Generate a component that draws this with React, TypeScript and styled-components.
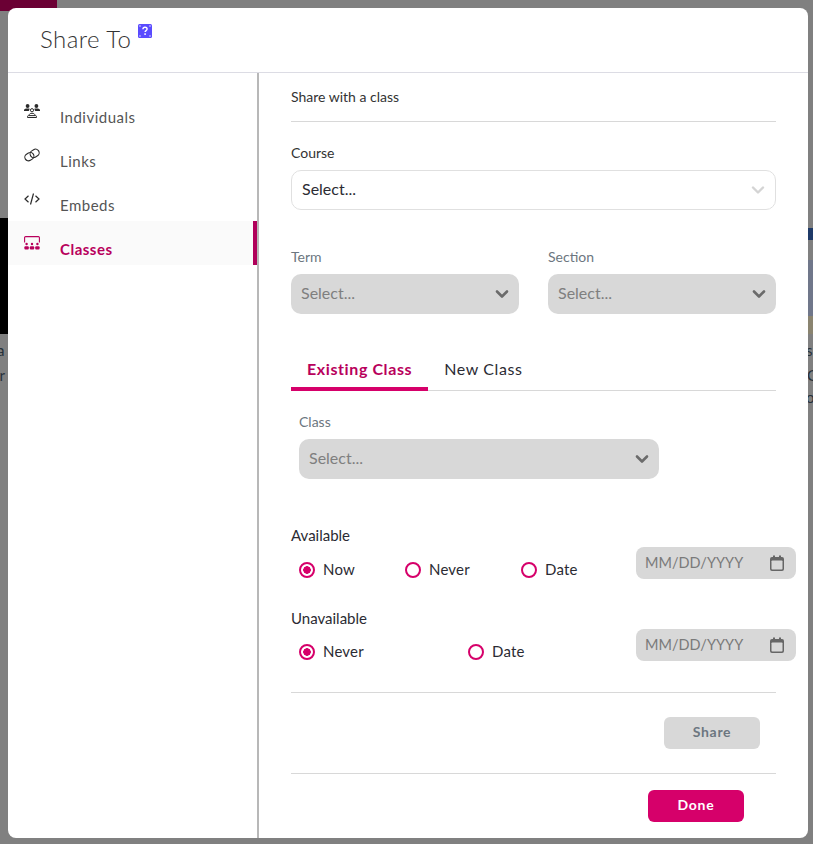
import React from 'react';
import styled, { createGlobalStyle } from 'styled-components';

const pink = '#d6006a';
const font = `Lato, "Open Sans", sans-serif`;

const GlobalStyle = createGlobalStyle`
  html, body {
    margin: 0;
    padding: 0;
    background: #808080;
    font-family: ${font};
    color: #2b2b33;
  }
`;

const App = () => {
  return (
    <Page>
      <GlobalStyle />
      <Backdrop />
      <BackdropText $left={-3} $top={341}>a</BackdropText>
      <BackdropText $left={-4} $top={366}>ir</BackdropText>
      <BackdropText $left={806} $top={341}>s</BackdropText>
      <BackdropText $left={807} $top={366}>C</BackdropText>
      <BackdropText $left={806} $top={388}>o</BackdropText>
      <Modal>
        <Header>
          <Title>Share To</Title>
          <HelpIcon />
        </Header>
        <Body>
          <Sidebar>
            <NavItem>
              <NavIcon><UsersIcon /></NavIcon>
              <NavText>Individuals</NavText>
            </NavItem>
            <NavItem>
              <NavIcon><LinkIcon /></NavIcon>
              <NavText>Links</NavText>
            </NavItem>
            <NavItem>
              <NavIcon><CodeIcon /></NavIcon>
              <NavText>Embeds</NavText>
            </NavItem>
            <NavItem $active>
              <NavIcon><ClassIcon /></NavIcon>
              <NavText>Classes</NavText>
            </NavItem>
          </Sidebar>
          <Main>
            <SectionTitle>Share with a class</SectionTitle>
            <Divider />
            <CourseField>
              <FieldLabel>Course</FieldLabel>
              <Select>
                <SelectValue>Select...</SelectValue>
                <Chevron color="#d4d4d4" weight={2.4} />
              </Select>
            </CourseField>
            <TwoCols>
              <div>
                <FieldLabel $muted>Term</FieldLabel>
                <Select $disabled>
                  <SelectValue>Select...</SelectValue>
                  <Chevron color="#6b6b6b" weight={2.6} />
                </Select>
              </div>
              <div>
                <FieldLabel $muted>Section</FieldLabel>
                <Select $disabled>
                  <SelectValue>Select...</SelectValue>
                  <Chevron color="#6b6b6b" weight={2.6} />
                </Select>
              </div>
            </TwoCols>
            <Tabs>
              <Tab $active>Existing Class</Tab>
              <Tab>New Class</Tab>
            </Tabs>
            <ClassField>
              <FieldLabel $muted>Class</FieldLabel>
              <Select $disabled>
                <SelectValue>Select...</SelectValue>
                <Chevron color="#6b6b6b" weight={2.6} />
              </Select>
            </ClassField>
            <AvailableHeading>Available</AvailableHeading>
            <RadioRow>
              <RadioGroup $columns="106px 116px 115px">
                <Radio checked label="Now" />
                <Radio label="Never" />
                <Radio label="Date" />
              </RadioGroup>
              <DateInput />
            </RadioRow>
            <UnavailableHeading>Unavailable</UnavailableHeading>
            <RadioRow>
              <RadioGroup $columns="169px 168px">
                <Radio checked label="Never" />
                <Radio label="Date" />
              </RadioGroup>
              <DateInput />
            </RadioRow>
            <ShareDivider />
            <ShareRow>
              <ShareButton>Share</ShareButton>
            </ShareRow>
            <Divider />
            <DoneRow>
              <DoneButton>Done</DoneButton>
            </DoneRow>
          </Main>
        </Body>
      </Modal>
    </Page>
  );
};

const Radio = ({ checked, label }: { checked?: boolean; label: string }) => (
  <RadioItem>
    <RadioCircle $checked={checked} />
    <RadioLabel>{label}</RadioLabel>
  </RadioItem>
);

const DateInput = () => (
  <DateBox>
    <DateText>MM/DD/YYYY</DateText>
    <svg width="14" height="16" viewBox="0 0 14 16">
      <path
        d="M3 0.5h2v1.5h4V0.5h2V2h1a2 2 0 0 1 2 2v10a2 2 0 0 1-2 2H2a2 2 0 0 1-2-2V4a2 2 0 0 1 2-2h1z"
        fill="#666"
      />
      <rect x="1.5" y="5.5" width="11" height="9" rx="0.8" fill="#d8d8d8" />
    </svg>
  </DateBox>
);

const Chevron = ({ color, weight }: { color: string; weight: number }) => (
  <svg width="14" height="10" viewBox="0 0 14 10" fill="none">
    <path
      d="M2 2.5 7 7.5 12 2.5"
      stroke={color}
      strokeWidth={weight}
      strokeLinecap="round"
      strokeLinejoin="round"
    />
  </svg>
);

const HelpIcon = () => (
  <HelpSvg width="14" height="14" viewBox="0 0 14 14">
    <rect width="14" height="14" rx="1.5" fill="#5a4bff" />
    <circle cx="2" cy="2" r="0.7" fill="#fff" />
    <circle cx="12" cy="2" r="0.7" fill="#fff" />
    <circle cx="2" cy="12" r="0.7" fill="#fff" />
    <circle cx="12" cy="12" r="0.7" fill="#fff" />
    <path
      d="M4.9 5.2C5 3.9 5.9 3.3 7 3.3c1.2 0 2.1.7 2.1 1.8 0 1.6-2 1.5-2 3"
      fill="none"
      stroke="#fff"
      strokeWidth="1.4"
    />
    <rect x="6.3" y="9.3" width="1.6" height="1.6" fill="#fff" />
  </HelpSvg>
);

const UsersIcon = () => (
  <svg width="16" height="14" viewBox="0 0 16 14">
    <circle cx="3.6" cy="2" r="1.9" fill="#2b2b2b" />
    <circle cx="12.4" cy="2" r="1.9" fill="#2b2b2b" />
    <path d="M0 7V6.2C0 5 1.2 4.4 3.6 4.4c.9 0 1.6.1 2.1.3L4.8 7z" fill="#2b2b2b" />
    <path d="M16 7V6.2c0-1.2-1.2-1.8-3.6-1.8-.9 0-1.6.1-2.1.3l.9 2.3z" fill="#2b2b2b" />
    <circle cx="8" cy="6.2" r="1.6" fill="none" stroke="#2b2b2b" />
    <path d="M5 11.6c0-1.6 1.2-2.3 3-2.3s3 .7 3 2.3" fill="none" stroke="#2b2b2b" />
    <path d="M3.5 12.6c0-.6.4-1 1-1h7c.6 0 1 .4 1 1v.9h-9z" fill="none" stroke="#2b2b2b" />
  </svg>
);

const LinkIcon = () => (
  <svg width="16" height="14" viewBox="0 0 16 14" fill="none" stroke="#2b2b2b" strokeWidth="1.1">
    <g transform="rotate(-32 8 7)">
      <rect x="0.2" y="3.4" width="9.4" height="7.2" rx="3.6" />
      <rect x="6.4" y="3.4" width="9.4" height="7.2" rx="3.6" />
    </g>
  </svg>
);

const CodeIcon = () => (
  <svg width="16" height="12" viewBox="0 0 16 12" fill="none" stroke="#2b2b2b" strokeWidth="1.2">
    <path d="M4.5 2.8 1 6l3.5 3.2" />
    <path d="M11.5 2.8 15 6l-3.5 3.2" />
    <path d="M9.5 0.5 6.5 11.5" />
  </svg>
);

const ClassIcon = () => (
  <svg width="16" height="14" viewBox="0 0 16 14" fill="#b8005c">
    <path d="M0.6 6.5V1.6a1 1 0 0 1 1-1h12.8a1 1 0 0 1 1 1v4.9" fill="none" stroke="#b8005c" strokeWidth="1.1" />
    <circle cx="2.6" cy="8" r="1.2" />
    <circle cx="8" cy="8" r="1.2" />
    <circle cx="13.4" cy="8" r="1.2" />
    <rect x="0.4" y="10.2" width="4.4" height="3.2" rx="1" />
    <rect x="5.8" y="10.2" width="4.4" height="3.2" rx="1" />
    <rect x="11.2" y="10.2" width="4.4" height="3.2" rx="1" />
  </svg>
);

/* dimmed page that shows round the modal */
const Page = styled.div`
  position: relative;
  width: 813px;
  height: 844px;
  padding: 8px 5px 6px 8px;
  box-sizing: border-box;
  overflow: hidden;
`;

const Backdrop = styled.div`
  position: absolute;
  inset: 0;
  background:
    linear-gradient(#000, #000) 0 218px / 8px 116px no-repeat,
    linear-gradient(#6b0034, #6b0034) 0 0 / 57px 11px no-repeat,
    linear-gradient(#1f3a68, #1f3a68) 808px 228px / 5px 12px no-repeat,
    linear-gradient(#70778a, #70778a) 808px 260px / 5px 56px no-repeat,
    linear-gradient(#8a8470, #8a8470) 808px 316px / 5px 18px no-repeat;
`;

const BackdropText = styled.span<{ $left: number; $top: number }>`
  position: absolute;
  left: ${(p) => p.$left}px;
  top: ${(p) => p.$top}px;
  font-size: 15px;
  color: #26303a;
`;

const Modal = styled.div`
  position: relative;
  display: flex;
  flex-direction: column;
  height: 100%;
  background: #fff;
  border-radius: 8px;
  overflow: hidden;
`;

const Header = styled.div`
  display: flex;
  align-items: flex-start;
  flex: 0 0 65px;
  box-sizing: border-box;
  padding: 16px 0 0 32px;
  border-bottom: 1px solid #dcdce4;
`;

const Title = styled.h1`
  margin: 0;
  font-size: 24px;
  line-height: 30px;
  font-weight: 300;
  color: #333;
  letter-spacing: 0.45px;
`;

const HelpSvg = styled.svg`
  margin: 0 0 0 7px;
`;

const Body = styled.div`
  display: flex;
  flex: 1;
  min-height: 0;
`;

const Sidebar = styled.nav`
  width: 251px;
  box-sizing: border-box;
  padding-top: 16px;
  border-right: 2px solid #b8b8b8;
`;

const NavItem = styled.div<{ $active?: boolean }>`
  display: flex;
  align-items: center;
  height: 44px;
  box-sizing: border-box;
  padding-left: 16px;
  font-size: 15px;
  font-weight: ${(p) => (p.$active ? 700 : 400)};
  color: ${(p) => (p.$active ? '#b8005c' : '#555')};
  background: ${(p) => (p.$active ? '#fafafa' : 'transparent')};
  border-right: 4px solid ${(p) => (p.$active ? '#b0005a' : 'transparent')};
`;

const NavIcon = styled.span`
  display: flex;
  justify-content: center;
  width: 16px;
  margin-right: 20px;
`;

const NavText = styled.span`
  padding-top: 12px;
  letter-spacing: 0.5px;
`;

const Main = styled.div`
  flex: 1;
  min-width: 0;
  padding: 0 32px;
`;

const SectionTitle = styled.div`
  font-size: 14px;
  line-height: 16px;
  margin: 16px 0;
  color: #333;
`;

const Divider = styled.hr`
  margin: 0;
  border: 0;
  border-top: 1px solid #d8d8d8;
`;

const CourseField = styled.div`
  margin-top: 23px;
`;

const FieldLabel = styled.div<{ $muted?: boolean }>`
  font-size: 14px;
  line-height: 16px;
  margin-bottom: 9px;
  color: ${(p) => (p.$muted ? '#6c7680' : '#333')};
`;

const Select = styled.div<{ $disabled?: boolean }>`
  display: flex;
  align-items: center;
  justify-content: space-between;
  height: 40px;
  box-sizing: border-box;
  padding: 0 10px;
  font-size: 16px;
  border-radius: 10px;
  color: ${(p) => (p.$disabled ? '#7f7f7f' : '#2b2b33')};
  background: ${(p) => (p.$disabled ? '#d8d8d8' : '#fff')};
  border: ${(p) => (p.$disabled ? '0' : '1px solid #e0e0e0')};
`;

const SelectValue = styled.span`
  padding-bottom: 3px;
`;

const TwoCols = styled.div`
  display: grid;
  grid-template-columns: 228px 228px;
  justify-content: space-between;
  margin-top: 39px;
`;

const Tabs = styled.div`
  display: flex;
  margin-top: 39px;
  border-bottom: 1px solid #d8d8d8;
`;

const Tab = styled.div<{ $active?: boolean }>`
  height: 38px;
  box-sizing: border-box;
  padding: 0 16px;
  font-size: 16px;
  line-height: 32px;
  letter-spacing: 0.6px;
  font-weight: ${(p) => (p.$active ? 700 : 400)};
  color: ${(p) => (p.$active ? '#b8005c' : '#2b2b33')};
  border-bottom: ${(p) => (p.$active ? `4px solid ${pink}` : '0')};
  margin-bottom: -1px;
`;

const ClassField = styled.div`
  width: 360px;
  margin: 23px 0 0 8px;
`;

const AvailableHeading = styled.div`
  font-size: 15px;
  line-height: 18px;
  margin-top: 47px;
`;

const UnavailableHeading = styled(AvailableHeading)`
  margin-top: 30px;
  margin-bottom: -1px;
`;

const RadioRow = styled.div`
  display: flex;
  justify-content: space-between;
  align-items: flex-start;
  margin: 3px -20px 0 0;
  height: 32px;
`;

const RadioGroup = styled.div<{ $columns: string }>`
  display: grid;
  grid-template-columns: ${(p) => p.$columns};
  padding: 15px 0 0 8px;
`;

const RadioItem = styled.div`
  display: flex;
  align-items: center;
  gap: 8px;
  font-size: 15px;
  line-height: 18px;
  letter-spacing: 0.2px;
`;

const RadioLabel = styled.span`
  margin-top: -2px;
`;

const RadioCircle = styled.span<{ $checked?: boolean }>`
  display: block;
  width: 16px;
  height: 16px;
  box-sizing: border-box;
  border: 2px solid ${pink};
  border-radius: 50%;
  background: ${(p) =>
    p.$checked ? `radial-gradient(circle, ${pink} 3.5px, transparent 4px)` : 'transparent'};
`;

const DateBox = styled.div`
  display: flex;
  align-items: center;
  justify-content: space-between;
  width: 160px;
  height: 32px;
  box-sizing: border-box;
  padding: 0 12px 0 9px;
  background: #d8d8d8;
  border-radius: 8px;
  font-size: 14.5px;
  color: #7a7a7a;
`;

const DateText = styled.span`
  margin-top: -1px;
`;

const ShareDivider = styled(Divider)`
  margin-top: 31px;
`;

const ShareRow = styled.div`
  display: flex;
  justify-content: flex-end;
  padding: 24px 16px 24px 0;
`;

const ActionButton = styled.button`
  width: 96px;
  height: 32px;
  padding: 0 0 3px;
  border: 0;
  border-radius: 6px;
  font-family: ${font};
  font-size: 14px;
  font-weight: 700;
  letter-spacing: 0.7px;
`;

const ShareButton = styled(ActionButton)`
  background: #d8d8d8;
  color: #6c7680;
`;

const DoneRow = styled.div`
  display: flex;
  justify-content: flex-end;
  padding: 16px 32px 0 0;
`;

const DoneButton = styled(ActionButton)`
  background: ${pink};
  color: #fff;
`;

export default App;
